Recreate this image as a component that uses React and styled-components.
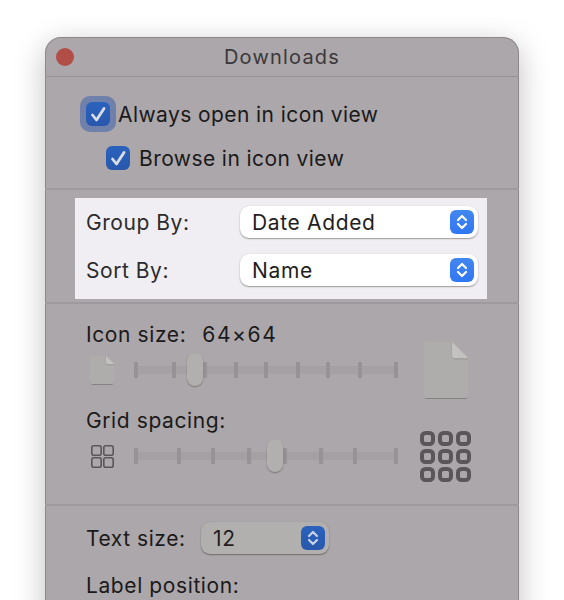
import React from "react";
import styled, { createGlobalStyle } from "styled-components";

const Global = createGlobalStyle`
  html, body { margin: 0; padding: 0; background: #fff; height: 600px; overflow: hidden; }
  body { font-family: Inter, "Liberation Sans", sans-serif; -webkit-font-smoothing: antialiased; }
  * { box-sizing: border-box; }
  svg { display: block; }
`;

const Page = styled.div`
  height: 600px;
  padding: 37px 45px 0;
  overflow: hidden;
`;

const Panel = styled.div`
  width: 474px;
  height: 640px;
  background: #aca7aa;
  border-radius: 16px 16px 0 0;
  box-shadow: inset 0 0 0 1px rgba(120, 116, 118, 0.6), 0 8px 30px rgba(0, 0, 0, 0.25);
  color: #1b1a1b;
  font-size: 21px;
  line-height: 24px;
  letter-spacing: 0.42px;
`;

const TitleBar = styled.div`
  height: 40px;
  display: grid;
  grid-template-columns: 1fr auto 1fr;
  align-items: center;
  padding: 0 11px;
  border-bottom: 1px solid #979296;
  font-size: 20px;
  letter-spacing: 1.2px;
  color: #3a383a;
`;

const CloseDot = styled.span`
  width: 18px;
  height: 18px;
  border-radius: 50%;
  background: #b24e48;
`;

const Section = styled.div`
  padding: ${(p) => p.$pad};
  border-bottom: ${(p) => (p.$last ? "0" : "2px solid #9f9a9d")};
  display: flex;
  flex-direction: column;
  gap: ${(p) => p.$gap || "0px"};
`;

const CheckRow = styled.label`
  display: flex;
  align-items: center;
  margin-left: ${(p) => p.$indent}px;
  gap: ${(p) => p.$gap}px;
`;

const RowText = styled.span`
  padding-top: 2px;
  height: 24px;
  line-height: 22px;
`;

const FocusRing = styled.span`
  width: 36px;
  height: 36px;
  padding: 6px;
  border-radius: 10px;
  background: #6f80aa;
`;

const CheckBox = styled.span`
  display: block;
  width: 24px;
  height: 24px;
  border-radius: 6px;
  background: linear-gradient(#2a62bd, #2858ad);
`;

const Highlight = styled.div`
  margin: 0 32px 0 30px;
  padding: 8px 9px 13px 11px;
  background: #f0eef2;
  display: flex;
  flex-direction: column;
  gap: 16px;
  color: #2b2a2c;
`;

const FieldRow = styled.div`
  display: flex;
  align-items: center;
  min-height: 32px;
  letter-spacing: 0.55px;
`;

const FieldLabel = styled(RowText)`
  width: ${(p) => p.$w}px;
  flex: none;
`;

const Select = styled.div`
  width: ${(p) => p.$w}px;
  height: 32px;
  padding: 0 4px 0 12px;
  border-radius: 9px;
  display: flex;
  align-items: center;
  justify-content: space-between;
  background: ${(p) => p.$bg};
  box-shadow: 0 1px 1.5px rgba(0, 0, 0, 0.35), 0 0 1px rgba(0, 0, 0, 0.15);
  color: #1f1e20;
  letter-spacing: 0.65px;
`;

const Stepper = styled.span`
  width: 24px;
  height: 24px;
  border-radius: 6px;
  display: flex;
  align-items: center;
  justify-content: center;
  background: ${(p) => p.$bg};
`;

const SliderLabel = styled.div`
  height: 24px;
  padding-top: 1px;
  margin-top: ${(p) => p.$top || 0}px;
  display: flex;
  gap: 16px;
  letter-spacing: 0.6px;
`;

const SizeValue = styled.span`
  letter-spacing: 1.6px;
`;

const SliderRow = styled.div`
  height: 48px;
  margin-left: 1px;
  display: grid;
  grid-template-columns: 47px 264px 1fr;
  grid-template-rows: 48px;
  align-items: center;
`;

const Track = styled.div`
  position: relative;
  height: 8px;
  background: #a5a0a3;
  border-radius: 1px;
`;

const Tick = styled.span`
  position: absolute;
  top: -4px;
  width: 4px;
  height: 16px;
  background: #979296;
`;

const Thumb = styled.span`
  position: absolute;
  top: -13px;
  width: 16px;
  height: 33px;
  border-radius: 8px;
  background: #b2b0ae;
  box-shadow: 0 1px 1.5px rgba(0, 0, 0, 0.3);
`;

const Check = () => (
  <svg width="24" height="24" viewBox="0 0 24 24" fill="none">
    <path d="M6.5 13 L10.5 18 L18 6.5" stroke="#d9dde6" strokeWidth="2.8" strokeLinecap="round" strokeLinejoin="round" />
  </svg>
);

const Chevrons = ({ color }) => (
  <svg width="24" height="24" viewBox="0 0 24 24" fill="none">
    <path d="M8 10 L12 6 L16 10 M8 14 L12 18 L16 14" stroke={color} strokeWidth="2.2" strokeLinecap="round" strokeLinejoin="round" />
  </svg>
);

const FileIcon = ({ w, h, fold, style }) => (
  <svg width={w} height={h} viewBox={`0 0 ${w} ${h}`} style={style}>
    <path
      d={`M0 ${h - 4} Q0 ${h} 3 ${h} H${w - 3} Q${w} ${h} ${w} ${h - 4} Z`}
      fill="#858183"
    />
    <path
      d={`M2 0 H${w - fold} L${w} ${fold} V${h - 3} Q${w} ${h - 1} ${w - 2} ${h - 1} H2 Q0 ${h - 1} 0 ${h - 3} V2 Q0 0 2 0 Z`}
      fill="#afadab"
    />
    <path d={`M${w - fold} 0 V${fold - 2} Q${w - fold} ${fold + 1} ${w - fold + 3} ${fold + 1} H${w}`} fill="none" stroke="#9a9897" strokeWidth="1" />
    <path d={`M${w - fold} 0 L${w} ${fold} H${w - fold + 2} Q${w - fold} ${fold} ${w - fold} ${fold - 2} Z`} fill="#c4c2c1" />
  </svg>
);

const GridIcon = ({ n, cell, gap, stroke, radius, style }) => {
  const items = [];
  for (let r = 0; r < n; r++)
    for (let c = 0; c < n; c++)
      items.push(
        <rect
          key={`${r}-${c}`}
          x={c * (cell + gap) + stroke / 2}
          y={r * (cell + gap) + stroke / 2}
          width={cell - stroke}
          height={cell - stroke}
          rx={radius}
          fill="none"
          stroke="#5a5659"
          strokeWidth={stroke}
        />
      );
  const size = n * cell + (n - 1) * gap;
  return (
    <svg width={size} height={size} viewBox={`0 0 ${size} ${size}`} style={style}>
      {items}
    </svg>
  );
};

const Slider = ({ ticks, thumb }) => (
  <Track>
    {ticks.map((x) => (
      <Tick key={x} style={{ left: x }} />
    ))}
    <Thumb style={{ left: thumb }} />
  </Track>
);

export default function App() {
  return (
    <Page>
      <Global />
      <Panel>
        <TitleBar>
          <CloseDot />
          <span>Downloads</span>
        </TitleBar>
        <Section $pad="19px 0 18px" $gap="14px">
          <CheckRow $indent={35} $gap={2}>
            <FocusRing>
              <CheckBox>
                <Check />
              </CheckBox>
            </FocusRing>
            <RowText>Always open in icon view</RowText>
          </CheckRow>
          <CheckRow $indent={61} $gap={9}>
            <CheckBox>
              <Check />
            </CheckBox>
            <RowText>Browse in icon view</RowText>
          </CheckRow>
        </Section>
        <Section $pad="8px 0 3px">
          <Highlight>
            <FieldRow>
              <FieldLabel $w={154}>Group By:</FieldLabel>
              <Select $w={238} $bg="#fff">
                <RowText>Date Added</RowText>
                <Stepper $bg="linear-gradient(#4287ee, #3176f5)">
                  <Chevrons color="#fff" />
                </Stepper>
              </Select>
            </FieldRow>
            <FieldRow>
              <FieldLabel $w={154}>Sort By:</FieldLabel>
              <Select $w={238} $bg="#fff">
                <RowText>Name</RowText>
                <Stepper $bg="linear-gradient(#4287ee, #3176f5)">
                  <Chevrons color="#fff" />
                </Stepper>
              </Select>
            </FieldRow>
          </Highlight>
        </Section>
        <Section $pad="18px 0 24px 41px">
          <SliderLabel>
            <span>Icon size:</span>
            <SizeValue>64×64</SizeValue>
          </SliderLabel>
          <SliderRow>
            <FileIcon w={24} h={29} fold={8} style={{ marginLeft: 3 }} />
            <Slider ticks={[0, 38, 69, 100, 130, 162, 192, 224, 260]} thumb={53} />
            <FileIcon w={44} h={57} fold={16} style={{ marginLeft: 26 }} />
          </SliderRow>
          <SliderLabel $top={14}>Grid spacing:</SliderLabel>
          <SliderRow>
            <GridIcon n={2} cell={11} gap={1} stroke={1.6} radius={2} style={{ marginLeft: 4 }} />
            <Slider ticks={[0, 43, 77, 113, 149, 185, 219, 260]} thumb={133} />
            <GridIcon n={3} cell={15} gap={3} stroke={4} radius={3.5} style={{ marginLeft: 22 }} />
          </SliderRow>
        </Section>
        <Section $pad="16px 0 0 41px" $gap="19px" $last>
          <FieldRow>
            <FieldLabel $w={115}>Text size:</FieldLabel>
            <Select $w={128} $bg="#b2b0ae">
              <RowText>12</RowText>
              <Stepper $bg="linear-gradient(#2a62bd, #2858ad)">
                <Chevrons color="#c9d3e6" />
              </Stepper>
            </Select>
          </FieldRow>
          <SliderLabel>Label position:</SliderLabel>
        </Section>
      </Panel>
    </Page>
  );
}
